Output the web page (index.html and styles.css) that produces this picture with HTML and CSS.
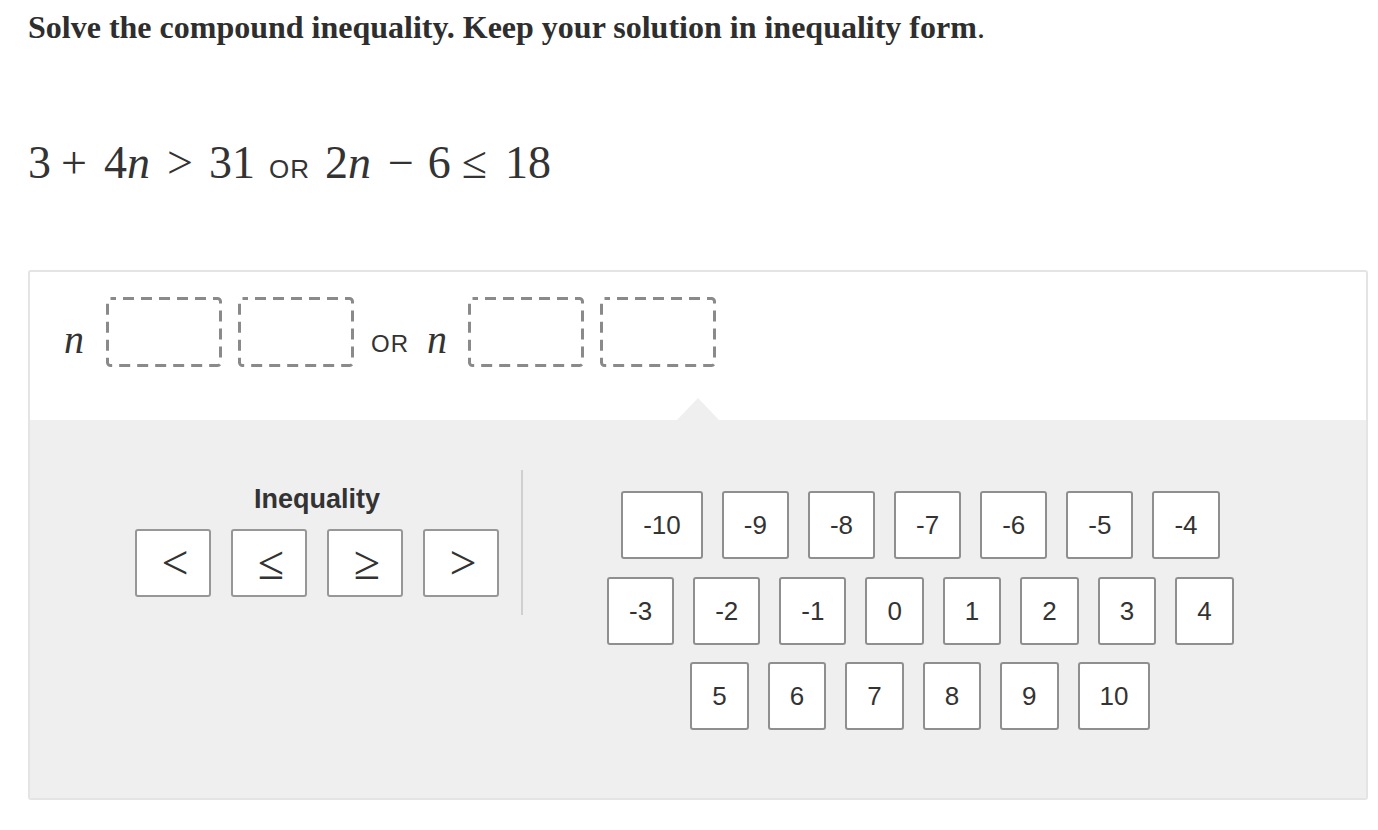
FILE: index.html
```html
<!DOCTYPE html>
<html lang="en">
<head>
<meta charset="utf-8">
<title>Compound inequality</title>
<link rel="stylesheet" href="styles.css">
</head>
<body>
<div class="page">
  <h1 class="prompt">Solve the compound inequality. Keep your solution in inequality form<span class="dot">.</span></h1>

  <div class="equation">
    <span class="m e-3">3</span>
    <span class="m e-plus">+</span>
    <span class="m e-4">4</span><span class="m it">n</span>
    <span class="m e-gt">&gt;</span>
    <span class="m e-31">31</span>
    <span class="word e-or">OR</span>
    <span class="m e-2">2</span><span class="m it">n</span>
    <span class="m e-minus">&minus;</span>
    <span class="m e-6">6</span>
    <span class="m e-le">&le;</span>
    <span class="m e-18">18</span>
  </div>

  <div class="panel">
    <div class="answer-row">
      <span class="var">n</span>
      <div class="slot slot-first">
        <svg width="116" height="70" viewBox="0 0 116 70"><rect x="1.5" y="1.5" width="113" height="67" rx="3" fill="none" stroke="#8a8a8a" stroke-width="3" stroke-dasharray="11 7" stroke-dashoffset="5.5"/></svg>
      </div>
      <div class="slot slot-next">
        <svg width="116" height="70" viewBox="0 0 116 70"><rect x="1.5" y="1.5" width="113" height="67" rx="3" fill="none" stroke="#8a8a8a" stroke-width="3" stroke-dasharray="11 7" stroke-dashoffset="5.5"/></svg>
      </div>
      <span class="word or-word">OR</span>
      <span class="var var-second">n</span>
      <div class="slot slot-after-var">
        <svg width="116" height="70" viewBox="0 0 116 70"><rect x="1.5" y="1.5" width="113" height="67" rx="3" fill="none" stroke="#8a8a8a" stroke-width="3" stroke-dasharray="11 7" stroke-dashoffset="5.5"/></svg>
      </div>
      <div class="slot slot-next">
        <svg width="116" height="70" viewBox="0 0 116 70"><rect x="1.5" y="1.5" width="113" height="67" rx="3" fill="none" stroke="#8a8a8a" stroke-width="3" stroke-dasharray="11 7" stroke-dashoffset="5.5"/></svg>
      </div>
    </div>

    <div class="keypad">
      <div class="ineq-group">
        <div class="ineq-label">Inequality</div>
        <div class="ineq-buttons">
          <div class="key sym">&lt;</div>
          <div class="key sym">&le;</div>
          <div class="key sym">&ge;</div>
          <div class="key sym">&gt;</div>
        </div>
      </div>
      <div class="divider"></div>
      <div class="numbers">
        <div class="num-row">
          <div class="tile">-10</div>
          <div class="tile">-9</div>
          <div class="tile">-8</div>
          <div class="tile">-7</div>
          <div class="tile">-6</div>
          <div class="tile">-5</div>
          <div class="tile">-4</div>
        </div>
        <div class="num-row">
          <div class="tile">-3</div>
          <div class="tile">-2</div>
          <div class="tile">-1</div>
          <div class="tile">0</div>
          <div class="tile">1</div>
          <div class="tile">2</div>
          <div class="tile">3</div>
          <div class="tile">4</div>
        </div>
        <div class="num-row">
          <div class="tile">5</div>
          <div class="tile">6</div>
          <div class="tile">7</div>
          <div class="tile">8</div>
          <div class="tile">9</div>
          <div class="tile">10</div>
        </div>
      </div>
    </div>
  </div>
</div>
</body>
</html>
```

FILE: styles.css
```css
* {
  box-sizing: border-box;
}

body {
  margin: 0;
  background: #ffffff;
  color: #333333;
  font-family: "Liberation Sans", Arial, sans-serif;
}

.page {
  width: 1378px;
  padding: 9px 11px 0 28px;
}

/* Prompt */
.prompt {
  margin: 0;
  font-family: "Liberation Serif", "Times New Roman", serif;
  font-weight: bold;
  font-size: 32px;
  line-height: 36px;
  color: #2e2e2e;
}

.prompt .dot {
  font-weight: normal;
}

/* Equation */
.equation {
  margin-top: 94.5px;
  display: flex;
  align-items: baseline;
  height: 46px;
  font-family: "Liberation Serif", "Times New Roman", serif;
  font-size: 46px;
  line-height: 46px;
  color: #333333;
}

.equation .it {
  font-style: italic;
}

.word {
  font-family: "Liberation Sans", Arial, sans-serif;
  font-size: 24px;
  letter-spacing: 1px;
  color: #333333;
}

.equation .word {
  font-size: 26px;
  line-height: 46px;
}

.e-plus { margin-left: 10px; }
.e-4 { margin-left: 17px; }
.e-gt { margin-left: 17px; }
.e-31 { margin-left: 16px; }
.e-or { margin-left: 14px; }
.e-2 { margin-left: 15px; }
.e-minus { margin-left: 17px; }
.e-6 { margin-left: 14px; }
.e-le { margin-left: 11px; }
.e-18 { margin-left: 18px; }

/* Panel */
.panel {
  width: 1340px;
  height: 530px;
  margin-top: 84.5px;
  border: 2px solid #e4e4e4;
  border-radius: 3px;
  overflow: hidden;
  background: #ffffff;
}

.answer-row {
  height: 148px;
  padding: 25px 0 0 34px;
  display: flex;
  align-items: flex-start;
}

.var {
  font-family: "Liberation Serif", "Times New Roman", serif;
  font-style: italic;
  font-size: 40px;
  line-height: 40px;
  padding-top: 22.5px;
  color: #333333;
}

.or-word {
  line-height: 24px;
  padding-top: 35px;
  margin-left: 17px;
}

.var-second {
  margin-left: 18px;
}

.slot {
  width: 116px;
  height: 70px;
  flex: none;
}

.slot svg {
  display: block;
}

.slot-first { margin-left: 22px; }
.slot-next { margin-left: 16px; }
.slot-after-var { margin-left: 21px; }

/* Keypad */
.keypad {
  position: relative;
  height: 378px;
  background: #efefef;
  padding: 50px 0 0 105px;
  display: flex;
  align-items: flex-start;
}

.keypad::before {
  content: "";
  position: absolute;
  left: 647px;
  top: -22px;
  width: 0;
  height: 0;
  border-left: 21.5px solid transparent;
  border-right: 21.5px solid transparent;
  border-bottom: 22px solid #efefef;
}

.ineq-group {
  width: 364px;
  margin-top: 14px;
}

.ineq-label {
  text-align: center;
  font-family: "Liberation Sans", Arial, sans-serif;
  font-weight: bold;
  font-size: 27px;
  line-height: 30px;
  color: #333333;
}

.ineq-buttons {
  display: flex;
  gap: 20px;
  margin-top: 15px;
}

.key {
  width: 76px;
  height: 68px;
  border: 2px solid #979797;
  border-radius: 3px;
  background: #ffffff;
  display: flex;
  align-items: center;
  justify-content: center;
}

.sym {
  font-family: "Liberation Serif", "Times New Roman", serif;
  font-size: 48px;
  line-height: 1;
  color: #333333;
  padding-left: 4px;
}

.divider {
  width: 2px;
  height: 145px;
  margin-left: 22px;
  background: #cfcfcf;
  flex: none;
}

.numbers {
  margin-left: 84px;
  margin-top: 21px;
  display: flex;
  flex-direction: column;
  align-items: center;
  gap: 17.5px;
}

.num-row {
  display: flex;
  gap: 19px;
}

.tile {
  height: 68px;
  min-width: 58px;
  padding: 0 20px;
  border: 2px solid #8f8f8f;
  border-radius: 3px;
  background: #ffffff;
  display: flex;
  align-items: center;
  justify-content: center;
  font-family: "Liberation Sans", Arial, sans-serif;
  font-size: 26px;
  line-height: 1;
  color: #333333;
}
```
